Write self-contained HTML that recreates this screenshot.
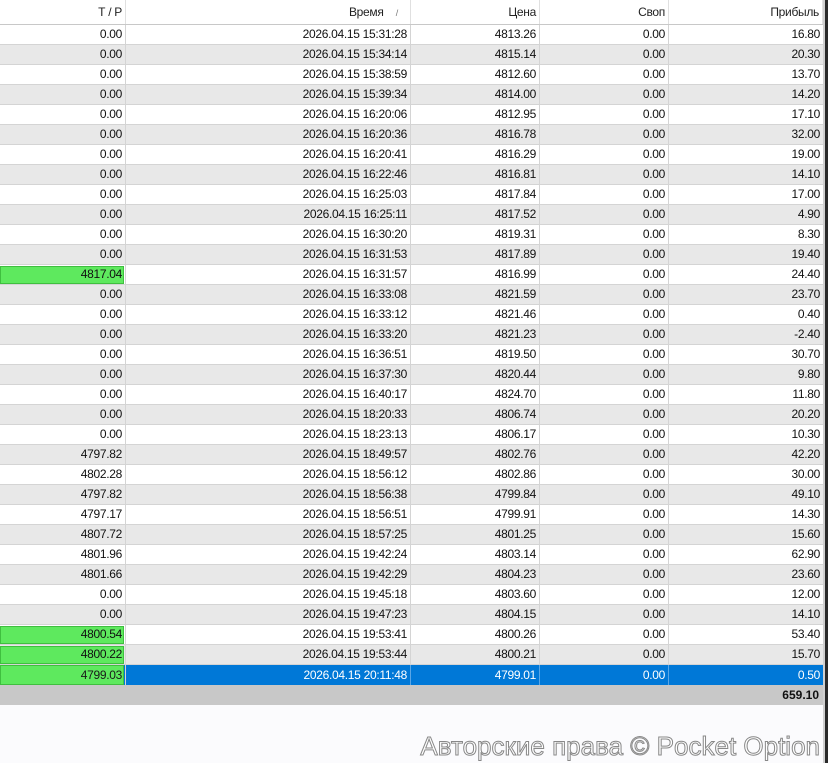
<!DOCTYPE html>
<html><head><meta charset="utf-8">
<style>
*{margin:0;padding:0;box-sizing:border-box}
body{width:828px;height:763px;background:#fbfbfd;font-family:"Liberation Sans",sans-serif;font-size:12px;color:#111;position:relative;overflow:hidden}
.row{position:absolute;left:0;width:823px;height:20px;border-bottom:1px solid #d4d4d4}
.c{position:absolute;top:0;height:19px;line-height:19px;text-align:right;padding-right:3px;border-right:1px solid #d4d4d4;white-space:nowrap;letter-spacing:-0.3px}
.c1{left:0;width:126px}.c2{left:126px;width:285px}.c3{left:411px;width:129px}.c4{left:540px;width:129px}.c5{left:669px;width:154px;border-right:none}
.w{background:#fff}.g{background:#e8e8e8}
.hdr{position:absolute;top:0;left:0;width:823px;height:25px;background:#fff;border-bottom:1px solid #c8c8c8}
.hdr .c{height:24px;line-height:24px;border-right:1px solid #e0e0e0;color:#222}
.grn{position:absolute;left:0;top:1px;width:124px;height:18px;background:#5ee95e;border:1px solid #3fbf3f}
.sel{background:#0078d7;color:#fff}
.sel .c{border-right-color:#5aa6e6}
</style></head><body>
<div class="hdr">
<div class="c c1">Т / Р</div><div class="c c2">Время&nbsp;&nbsp;&nbsp;&nbsp;<span style="font-size:9px;color:#777">/</span>&nbsp;&nbsp;&nbsp;</div><div class="c c3">Цена</div><div class="c c4">Своп</div><div class="c c5">Прибыль</div>
</div>
<div class="row w" style="top:25px"><div class="c c1">0.00</div><div class="c c2">2026.04.15 15:31:28</div><div class="c c3">4813.26</div><div class="c c4">0.00</div><div class="c c5">16.80</div></div>
<div class="row g" style="top:45px"><div class="c c1">0.00</div><div class="c c2">2026.04.15 15:34:14</div><div class="c c3">4815.14</div><div class="c c4">0.00</div><div class="c c5">20.30</div></div>
<div class="row w" style="top:65px"><div class="c c1">0.00</div><div class="c c2">2026.04.15 15:38:59</div><div class="c c3">4812.60</div><div class="c c4">0.00</div><div class="c c5">13.70</div></div>
<div class="row g" style="top:85px"><div class="c c1">0.00</div><div class="c c2">2026.04.15 15:39:34</div><div class="c c3">4814.00</div><div class="c c4">0.00</div><div class="c c5">14.20</div></div>
<div class="row w" style="top:105px"><div class="c c1">0.00</div><div class="c c2">2026.04.15 16:20:06</div><div class="c c3">4812.95</div><div class="c c4">0.00</div><div class="c c5">17.10</div></div>
<div class="row g" style="top:125px"><div class="c c1">0.00</div><div class="c c2">2026.04.15 16:20:36</div><div class="c c3">4816.78</div><div class="c c4">0.00</div><div class="c c5">32.00</div></div>
<div class="row w" style="top:145px"><div class="c c1">0.00</div><div class="c c2">2026.04.15 16:20:41</div><div class="c c3">4816.29</div><div class="c c4">0.00</div><div class="c c5">19.00</div></div>
<div class="row g" style="top:165px"><div class="c c1">0.00</div><div class="c c2">2026.04.15 16:22:46</div><div class="c c3">4816.81</div><div class="c c4">0.00</div><div class="c c5">14.10</div></div>
<div class="row w" style="top:185px"><div class="c c1">0.00</div><div class="c c2">2026.04.15 16:25:03</div><div class="c c3">4817.84</div><div class="c c4">0.00</div><div class="c c5">17.00</div></div>
<div class="row g" style="top:205px"><div class="c c1">0.00</div><div class="c c2">2026.04.15 16:25:11</div><div class="c c3">4817.52</div><div class="c c4">0.00</div><div class="c c5">4.90</div></div>
<div class="row w" style="top:225px"><div class="c c1">0.00</div><div class="c c2">2026.04.15 16:30:20</div><div class="c c3">4819.31</div><div class="c c4">0.00</div><div class="c c5">8.30</div></div>
<div class="row g" style="top:245px"><div class="c c1">0.00</div><div class="c c2">2026.04.15 16:31:53</div><div class="c c3">4817.89</div><div class="c c4">0.00</div><div class="c c5">19.40</div></div>
<div class="row w" style="top:265px"><div class="grn"></div><div class="c c1">4817.04</div><div class="c c2">2026.04.15 16:31:57</div><div class="c c3">4816.99</div><div class="c c4">0.00</div><div class="c c5">24.40</div></div>
<div class="row g" style="top:285px"><div class="c c1">0.00</div><div class="c c2">2026.04.15 16:33:08</div><div class="c c3">4821.59</div><div class="c c4">0.00</div><div class="c c5">23.70</div></div>
<div class="row w" style="top:305px"><div class="c c1">0.00</div><div class="c c2">2026.04.15 16:33:12</div><div class="c c3">4821.46</div><div class="c c4">0.00</div><div class="c c5">0.40</div></div>
<div class="row g" style="top:325px"><div class="c c1">0.00</div><div class="c c2">2026.04.15 16:33:20</div><div class="c c3">4821.23</div><div class="c c4">0.00</div><div class="c c5">-2.40</div></div>
<div class="row w" style="top:345px"><div class="c c1">0.00</div><div class="c c2">2026.04.15 16:36:51</div><div class="c c3">4819.50</div><div class="c c4">0.00</div><div class="c c5">30.70</div></div>
<div class="row g" style="top:365px"><div class="c c1">0.00</div><div class="c c2">2026.04.15 16:37:30</div><div class="c c3">4820.44</div><div class="c c4">0.00</div><div class="c c5">9.80</div></div>
<div class="row w" style="top:385px"><div class="c c1">0.00</div><div class="c c2">2026.04.15 16:40:17</div><div class="c c3">4824.70</div><div class="c c4">0.00</div><div class="c c5">11.80</div></div>
<div class="row g" style="top:405px"><div class="c c1">0.00</div><div class="c c2">2026.04.15 18:20:33</div><div class="c c3">4806.74</div><div class="c c4">0.00</div><div class="c c5">20.20</div></div>
<div class="row w" style="top:425px"><div class="c c1">0.00</div><div class="c c2">2026.04.15 18:23:13</div><div class="c c3">4806.17</div><div class="c c4">0.00</div><div class="c c5">10.30</div></div>
<div class="row g" style="top:445px"><div class="c c1">4797.82</div><div class="c c2">2026.04.15 18:49:57</div><div class="c c3">4802.76</div><div class="c c4">0.00</div><div class="c c5">42.20</div></div>
<div class="row w" style="top:465px"><div class="c c1">4802.28</div><div class="c c2">2026.04.15 18:56:12</div><div class="c c3">4802.86</div><div class="c c4">0.00</div><div class="c c5">30.00</div></div>
<div class="row g" style="top:485px"><div class="c c1">4797.82</div><div class="c c2">2026.04.15 18:56:38</div><div class="c c3">4799.84</div><div class="c c4">0.00</div><div class="c c5">49.10</div></div>
<div class="row w" style="top:505px"><div class="c c1">4797.17</div><div class="c c2">2026.04.15 18:56:51</div><div class="c c3">4799.91</div><div class="c c4">0.00</div><div class="c c5">14.30</div></div>
<div class="row g" style="top:525px"><div class="c c1">4807.72</div><div class="c c2">2026.04.15 18:57:25</div><div class="c c3">4801.25</div><div class="c c4">0.00</div><div class="c c5">15.60</div></div>
<div class="row w" style="top:545px"><div class="c c1">4801.96</div><div class="c c2">2026.04.15 19:42:24</div><div class="c c3">4803.14</div><div class="c c4">0.00</div><div class="c c5">62.90</div></div>
<div class="row g" style="top:565px"><div class="c c1">4801.66</div><div class="c c2">2026.04.15 19:42:29</div><div class="c c3">4804.23</div><div class="c c4">0.00</div><div class="c c5">23.60</div></div>
<div class="row w" style="top:585px"><div class="c c1">0.00</div><div class="c c2">2026.04.15 19:45:18</div><div class="c c3">4803.60</div><div class="c c4">0.00</div><div class="c c5">12.00</div></div>
<div class="row g" style="top:605px"><div class="c c1">0.00</div><div class="c c2">2026.04.15 19:47:23</div><div class="c c3">4804.15</div><div class="c c4">0.00</div><div class="c c5">14.10</div></div>
<div class="row w" style="top:625px"><div class="grn"></div><div class="c c1">4800.54</div><div class="c c2">2026.04.15 19:53:41</div><div class="c c3">4800.26</div><div class="c c4">0.00</div><div class="c c5">53.40</div></div>
<div class="row g" style="top:645px"><div class="grn"></div><div class="c c1">4800.22</div><div class="c c2">2026.04.15 19:53:44</div><div class="c c3">4800.21</div><div class="c c4">0.00</div><div class="c c5">15.70</div></div>
<div class="row sel" style="top:665px;border-bottom:none"><div class="grn" style="top:0;height:20px"></div><div class="c c1" style="color:#1a1a1a;border-right-color:#d4d4d4;height:20px;line-height:20px">4799.03</div><div class="c c2" style="height:20px;line-height:20px">2026.04.15 20:11:48</div><div class="c c3" style="height:20px;line-height:20px">4799.01</div><div class="c c4" style="height:20px;line-height:20px">0.00</div><div class="c c5" style="height:20px;line-height:20px">0.50</div></div>
<div style="position:absolute;top:685px;left:0;width:823px;height:20px;background:#c8c8c8;text-align:right;padding-right:4px;line-height:20px;font-weight:bold">659.10</div>
<div style="position:absolute;top:0;left:823px;width:2px;height:763px;background:#d0d0d0"></div>
<div style="position:absolute;top:0;left:825px;width:3px;height:763px;background:#2a2a2a"></div>
<div style="position:absolute;top:731px;right:8px;font-size:26px;color:#fff;-webkit-text-stroke:1px #888;letter-spacing:0px;white-space:nowrap">Авторские права © Pocket Option</div>
</body></html>
